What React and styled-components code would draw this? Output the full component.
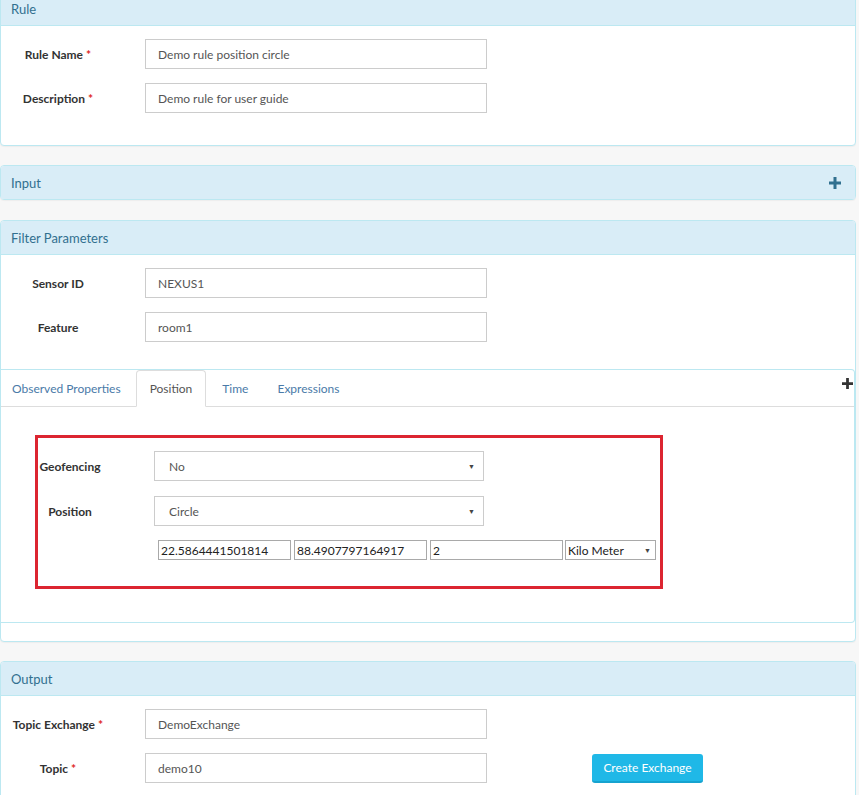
import React from 'react';
import styled, { createGlobalStyle } from 'styled-components';

const GlobalStyle = createGlobalStyle`
  html, body {
    margin: 0;
    padding: 0;
    background: #f7f7f7;
    font-family: Lato, "Open Sans", sans-serif;
    color: #333;
    overflow: hidden;
  }
`;

const Page = styled.div`
  width: 856px;
  height: 795px;
  overflow: hidden;
`;

const Panel = styled.div`
  background: #fff;
  border: 1px solid #bce8f1;
  border-radius: 4px;
  margin-top: ${(p) => p.$top || 0}px;
  margin-bottom: ${(p) => p.$mb || 19}px;
  box-shadow: 0 1px 1px rgba(0, 0, 0, 0.04);
`;

const Heading = styled.div`
  height: 33px;
  display: flex;
  align-items: center;
  justify-content: space-between;
  padding: 0 14px 0 10px;
  background: #d9edf7;
  color: #31708f;
  font-size: 13px;
  border-bottom: ${(p) => (p.$closed ? 'none' : '1px solid #bce8f1')};
  border-radius: 3px 3px 0 0;
`;

const Body = styled.div`
  padding: ${(p) => p.$pad || '13px 0 32px 0'};
  display: flex;
  flex-direction: column;
  gap: 14px;
`;

const Row = styled.div`
  display: flex;
  align-items: center;
`;

const Label = styled.div`
  width: 114px;
  margin-right: 30px;
  text-align: center;
  font-size: 12px;
  font-weight: 700;
  color: #333;
`;

const Star = styled.span`
  color: #e02727;
  margin-left: 3px;
`;

const Input = styled.div`
  width: 342px;
  height: 30px;
  box-sizing: border-box;
  border: 1px solid #ccc;
  display: flex;
  align-items: center;
  padding-left: 12px;
  font-size: 12px;
  color: #555;
  background: #fff;
`;

const TabPanel = styled.div`
  position: relative;
  margin-top: 13px;
  border-top: 1px solid #bce8f1;
  border-right: 1px solid #bce8f1;
  border-bottom: 1px solid #bce8f1;
  border-radius: 0 4px 4px 0;
  padding-bottom: 33px;
`;

const TabBar = styled.div`
  display: flex;
  height: 36px;
  border-bottom: 1px solid #ddd;
`;

const Tab = styled.div`
  display: flex;
  align-items: center;
  padding: ${(p) => p.$pad || '0 13px'};
  margin-bottom: -1px;
  font-size: 12px;
  color: ${(p) => (p.$active ? '#555' : '#4a7aa8')};
  background: ${(p) => (p.$active ? '#fff' : 'transparent')};
  border: 1px solid ${(p) => (p.$active ? '#ddd' : 'transparent')};
  border-bottom-color: ${(p) => (p.$active ? '#fff' : 'transparent')};
  border-radius: 4px 4px 0 0;
`;

const CornerPlus = styled.div`
  position: absolute;
  right: 1px;
  top: 3px;
  color: #333;
`;

const Highlight = styled.div`
  margin: 28px 0 0 34px;
  width: 628px;
  box-sizing: border-box;
  border: 3px solid #dc2531;
  padding: 13px 0 26px 0;
  display: flex;
  flex-direction: column;
  gap: 15px;
`;

const GeoLabel = styled.div`
  width: 64px;
  margin-right: 52px;
  text-align: center;
  font-size: 12px;
  font-weight: 700;
  color: #333;
`;

const Select = styled.div`
  width: 330px;
  height: 30px;
  box-sizing: border-box;
  border: 1px solid #ccc;
  display: flex;
  align-items: center;
  justify-content: space-between;
  padding: 0 8px 0 14px;
  font-size: 12px;
  color: #555;
`;

const Arrow = styled.span`
  font-size: 7px;
  color: #444;
`;

const CoordRow = styled.div`
  display: flex;
  gap: 3px;
  margin-left: 120px;
  margin-top: -1px;
`;

const Small = styled.div`
  width: ${(p) => p.$w || 133}px;
  height: 20px;
  box-sizing: border-box;
  border: 1px solid #a9a9a9;
  display: flex;
  align-items: center;
  justify-content: space-between;
  padding: 0 4px 0 2px;
  font-size: 12px;
  color: #222;
  margin-left: ${(p) => p.$ml || 0}px;
`;

const Button = styled.div`
  margin-left: 105px;
  width: 111px;
  height: 29px;
  box-sizing: border-box;
  background: #1fb8e7;
  border-bottom: 2px solid #17a3cf;
  border-radius: 3px;
  color: #fff;
  font-size: 12px;
  display: flex;
  align-items: center;
  justify-content: center;
`;

const Plus = ({ color, size = 12 }) => (
  <svg width={size} height={size} viewBox="0 0 12 12">
    <path d="M4.5 0h3v4.5H12v3H7.5V12h-3V7.5H0v-3h4.5z" fill={color} />
  </svg>
);

export default function App() {
  return (
    <Page>
      <GlobalStyle />
      <Panel $top={-9}>
        <Heading>Rule</Heading>
        <Body>
          <Row>
            <Label>Rule Name<Star>*</Star></Label>
            <Input>Demo rule position circle</Input>
          </Row>
          <Row>
            <Label>Description<Star>*</Star></Label>
            <Input>Demo rule for user guide</Input>
          </Row>
        </Body>
      </Panel>

      <Panel $mb={20}>
        <Heading $closed>
          Input
          <Plus color="#31708f" />
        </Heading>
      </Panel>

      <Panel>
        <Heading>Filter Parameters</Heading>
        <Body $pad="13px 0 18px 0">
          <Row>
            <Label>Sensor ID</Label>
            <Input>NEXUS1</Input>
          </Row>
          <Row>
            <Label>Feature</Label>
            <Input>room1</Input>
          </Row>
          <TabPanel>
            <TabBar>
              <Tab $pad="0 14px 0 10px">Observed Properties</Tab>
              <Tab $active>Position</Tab>
              <Tab $pad="0 12px 0 15px">Time</Tab>
              <Tab $pad="0 15px">Expressions</Tab>
            </TabBar>
            <CornerPlus><Plus color="#333" size={11} /></CornerPlus>
            <Highlight>
              <Row>
                <GeoLabel>Geofencing</GeoLabel>
                <Select>No<Arrow>▼</Arrow></Select>
              </Row>
              <Row>
                <GeoLabel>Position</GeoLabel>
                <Select>Circle<Arrow>▼</Arrow></Select>
              </Row>
              <CoordRow>
                <Small>22.5864441501814</Small>
                <Small>88.4907797164917</Small>
                <Small>2</Small>
                <Small $w={91} $ml={-1}>Kilo Meter<Arrow>▼</Arrow></Small>
              </CoordRow>
            </Highlight>
          </TabPanel>
        </Body>
      </Panel>

      <Panel>
        <Heading>Output</Heading>
        <Body $pad="13px 0 20px 0">
          <Row>
            <Label>Topic Exchange<Star>*</Star></Label>
            <Input>DemoExchange</Input>
          </Row>
          <Row>
            <Label>Topic<Star>*</Star></Label>
            <Input>demo10</Input>
            <Button>Create Exchange</Button>
          </Row>
        </Body>
      </Panel>
    </Page>
  );
}
